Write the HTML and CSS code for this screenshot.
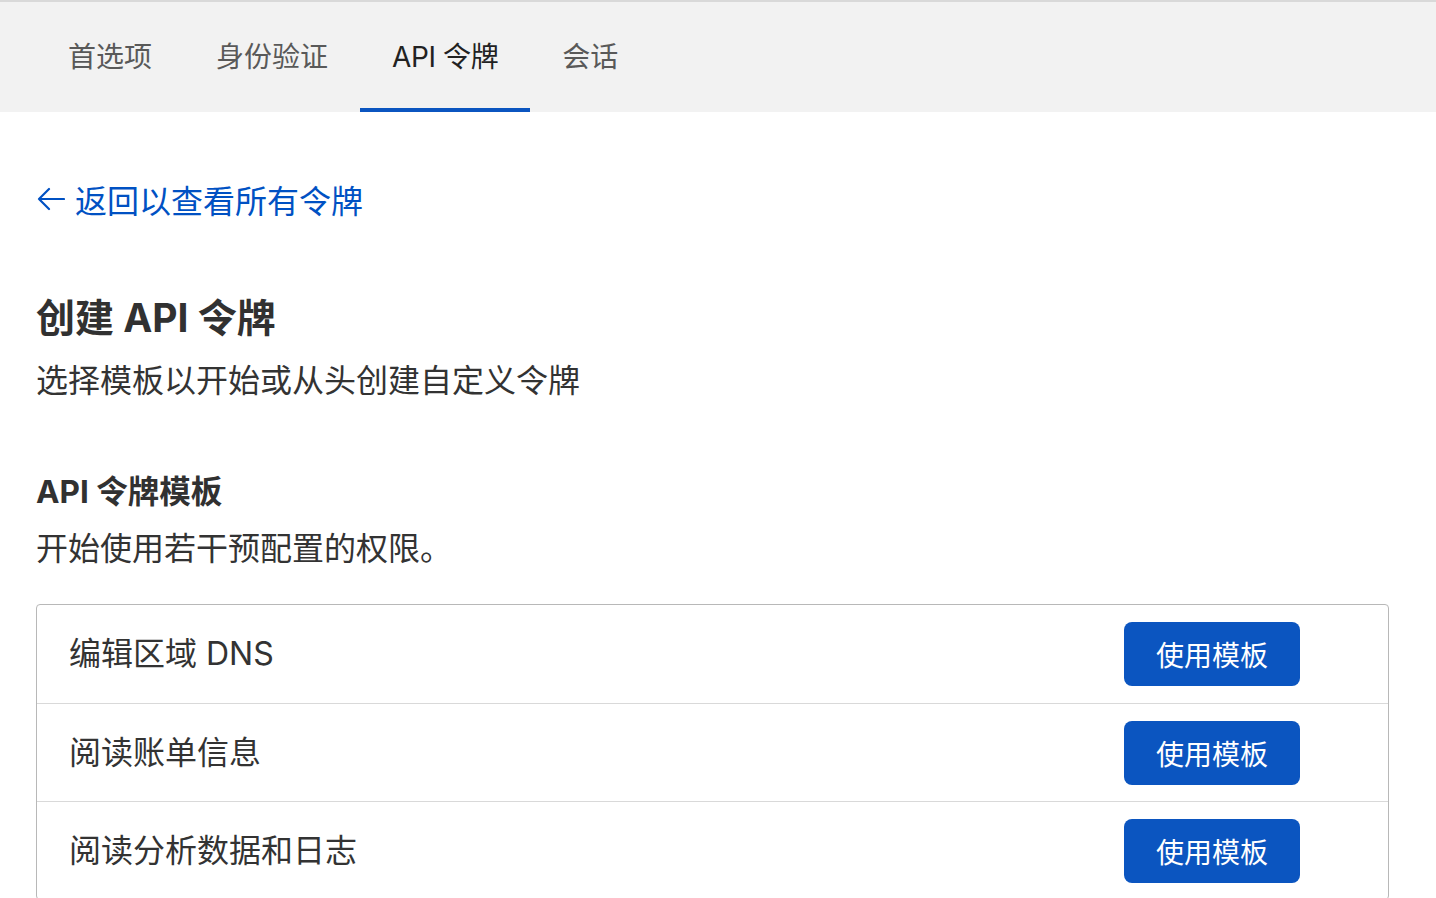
FILE: index.html
```html
<!DOCTYPE html>
<html lang="zh-CN">
<head>
<meta charset="utf-8">
<link rel="stylesheet" href="styles.css">
</head>
<body>
<nav class="tabs">
  <a class="tab">首选项</a>
  <a class="tab">身份验证</a>
  <a class="tab active">API 令牌</a>
  <a class="tab">会话</a>
</nav>
<main class="main">
  <a class="back">
    <svg class="back-icon" width="28" height="24" viewBox="0 0 28 24" fill="none" stroke="currentColor" stroke-width="2.2" stroke-linecap="round" stroke-linejoin="round"><path d="M27 12H2M12 2L2 12L12 22"/></svg>
    <span>返回以查看所有令牌</span>
  </a>
  <h1 class="title">创建 API 令牌</h1>
  <p class="subtitle">选择模板以开始或从头创建自定义令牌</p>
  <h2 class="section-title">API 令牌模板</h2>
  <p class="section-desc">开始使用若干预配置的权限。</p>
  <div class="list">
    <div class="row"><span class="row-name">编辑区域 DNS</span><button class="btn">使用模板</button></div>
    <div class="row"><span class="row-name">阅读账单信息</span><button class="btn">使用模板</button></div>
    <div class="row"><span class="row-name">阅读分析数据和日志</span><button class="btn">使用模板</button></div>
  </div>
</main>
</body>
</html>
```

FILE: styles.css
```css
html, body {
  margin: 0;
  padding: 0;
  background: #ffffff;
}
body {
  font-family: Inter, "Noto Sans CJK SC", sans-serif;
  color: #333333;
  overflow: hidden;
  height: 898px;
}
.tabs {
  display: flex;
  background: #f2f2f2;
  border-top: 2px solid #d9d9d9;
  padding-left: 36px;
  box-sizing: border-box;
  height: 112px;
}
.tab {
  display: flex;
  align-items: center;
  padding: 0 32px;
  font-size: 28px;
  color: #595959;
  border-bottom: 4px solid transparent;
  box-sizing: border-box;
}
.tab.active {
  color: #222222;
  border-bottom-color: #0b55c0;
  letter-spacing: -0.4px;
}
.main {
  padding: 0 36px;
}
.back {
  display: flex;
  align-items: center;
  gap: 10px;
  margin-top: 63px;
  height: 48px;
  font-size: 32px;
  color: #0051c3;
}
.back-icon {
  margin-left: 1px;
}
.title {
  margin: 71px 0 0;
  font-size: 39px;
  line-height: 48px;
  font-weight: 700;
  color: #313131;
}
.subtitle {
  margin: 15px 0 0;
  font-size: 32px;
  line-height: 48px;
  color: #333333;
}
.section-title {
  margin: 65px 0 0;
  font-size: 31.5px;
  line-height: 44px;
  font-weight: 700;
  color: #313131;
}
.section-desc {
  margin: 11px 0 0;
  font-size: 32px;
  line-height: 48px;
  color: #333333;
}
.list {
  margin-top: 31px;
  width: 1353px;
  border: 1px solid #b8b8b8;
  border-radius: 4px;
  box-sizing: border-box;
}
.row {
  display: flex;
  align-items: center;
  justify-content: space-between;
  padding: 16.5px 88px 16.5px 32px;
  border-top: 1px solid #d9d9d9;
}
.row:first-child {
  border-top: none;
  padding-top: 17px;
  padding-bottom: 17px;
}
.row-name {
  font-size: 32px;
  color: #333333;
  margin-bottom: 6px;
}
.btn {
  font-family: inherit;
  font-size: 28px;
  height: 64px;
  padding: 0 32px;
  background: #0b55c0;
  color: #ffffff;
  border: none;
  border-radius: 8px;
}
```
